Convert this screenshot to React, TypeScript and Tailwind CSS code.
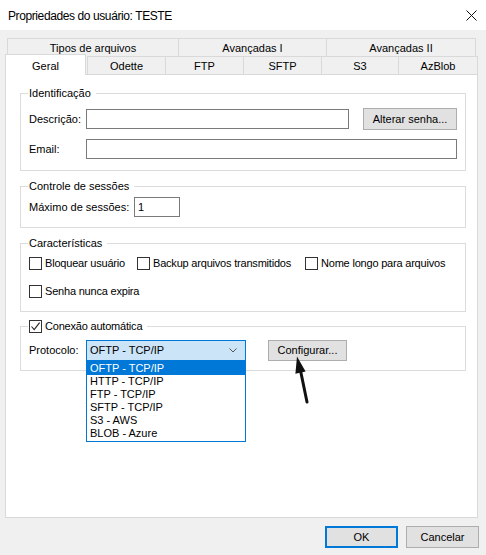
import React from 'react';

// Windows-style "Propriedades do usuário" dialog

const CheckMark = () => (
  <svg width="11" height="11" viewBox="0 0 11 11">
    <path d="M1.5 5.5 L4.2 8.6 L9.6 1.6" fill="none" stroke="#222" strokeWidth="1.1" />
  </svg>
);

const Checkbox: React.FC<{ label: string; checked?: boolean; className?: string }> = ({ label, checked, className }) => (
  <div className={`flex items-center h-[13px] ${className ?? ''}`}>
    <span className="w-[13px] h-[13px] shrink-0 border border-[#333333] bg-white flex items-center justify-center">
      {checked && <CheckMark />}
    </span>
    <span className="ml-[3px] leading-[13px] whitespace-nowrap tracking-[-0.2px]">{label}</span>
  </div>
);

const Group: React.FC<{ legend: React.ReactNode; className?: string; children?: React.ReactNode }> = ({
  legend,
  className,
  children,
}) => (
  <div className={`relative border border-[#dcdcdc] ${className ?? ''}`}>
    <div className="absolute left-[7px] -top-[7px] bg-white pl-[1px] pr-[5px] leading-[13px] whitespace-nowrap">
      {legend}
    </div>
    {children}
  </div>
);

const Button: React.FC<{ label: string; className?: string }> = ({ label, className }) => (
  <div
    className={`flex items-center justify-center bg-[#e1e1e1] border border-[#adadad] text-black whitespace-nowrap ${className ?? ''}`}
  >
    {label}
  </div>
);

const protocols = ['OFTP - TCP/IP', 'HTTP - TCP/IP', 'FTP - TCP/IP', 'SFTP - TCP/IP', 'S3 - AWS', 'BLOB - Azure'];

export default function App() {
  return (
    <div className="relative w-[486px] h-[555px] overflow-hidden bg-[#f0f0f0] text-[11px] text-black font-['Liberation_Sans',Arial,sans-serif]">
      {/* title bar */}
      <div className="h-[30px] bg-white flex items-center justify-between pl-[8px] pr-[9px]">
        <span className="text-[12px] leading-[14px] pt-[1px] tracking-[-0.4px]">Propriedades do usuário: TESTE</span>
        <svg width="11" height="11" viewBox="0 0 11 11" className="mt-[1px]">
          <path d="M0.5 0.5 L10.5 10.5 M10.5 0.5 L0.5 10.5" stroke="#111" strokeWidth="1" />
        </svg>
      </div>

      <div className="px-[5px] pt-[8px]">
        {/* tabs, upper row */}
        <div className="ml-[2px] flex h-[19px]">
          <div className="w-[171px] border-l border-t border-[#d9d9d9] flex items-center justify-center pt-[1px]">
            Tipos de arquivos
          </div>
          <div className="w-[148px] border-l border-t border-[#d9d9d9] flex items-center justify-center pt-[1px]">
            Avançadas I
          </div>
          <div className="w-[150px] border-l border-t border-r border-[#d9d9d9] flex items-center justify-center pt-[1px]">
            Avançadas II
          </div>
        </div>
        {/* tabs, lower row */}
        <div className="-mt-[3px] flex items-end h-[20px]">
          <div className="relative z-10 -mb-[1px] w-[81px] h-[21px] bg-white border-l border-t border-r border-[#d9d9d9] flex items-start justify-center pt-[3px]">
            Geral
          </div>
          <div className="w-[78px] h-[18px] ml-[1px] border-l border-t border-[#d9d9d9] flex items-center justify-center pt-[1px]">
            Odette
          </div>
          <div className="w-[78px] h-[18px] border-l border-t border-[#d9d9d9] flex items-center justify-center pt-[1px]">
            FTP
          </div>
          <div className="w-[78px] h-[18px] border-l border-t border-[#d9d9d9] flex items-center justify-center pt-[1px]">
            SFTP
          </div>
          <div className="w-[77px] h-[18px] border-l border-t border-[#d9d9d9] flex items-center justify-center pt-[1px]">
            S3
          </div>
          <div className="w-[80px] h-[18px] border-l border-t border-r border-[#d9d9d9] flex items-center justify-center pt-[1px]">
            AzBlob
          </div>
        </div>

        {/* tab page */}
        <div className="w-[473px] h-[444px] bg-white border border-[#d9d9d9] pl-[14px] pr-[11px] pt-[18px]">
          <Group legend="Identificação" className="h-[78px] pl-[8px] pr-[8px] pt-[14px]">
            <div className="flex items-center h-[22px]">
              <span className="w-[57px] shrink-0">Descrição:</span>
              <div className="flex-1 h-[20px] border border-[#7a7a7a] bg-white" />
              <Button label="Alterar senha..." className="ml-[14px] w-[94px] h-[22px]" />
            </div>
            <div className="flex items-center h-[20px] mt-[9px]">
              <span className="w-[57px] shrink-0">Email:</span>
              <div className="flex-1 h-[20px] border border-[#7a7a7a] bg-white" />
            </div>
          </Group>

          <Group legend="Controle de sessões" className="mt-[15px] h-[42px] pl-[8px] pt-[10px]">
            <div className="flex items-center h-[20px]">
              <span className="w-[105px] shrink-0">Máximo de sessões:</span>
              <div className="w-[46px] h-[20px] border border-[#7a7a7a] bg-white pl-[3px] leading-[18px]">1</div>
            </div>
          </Group>

          <Group legend="Características" className="mt-[15px] h-[69px] pl-[8px] pt-[13px]">
            <div className="flex">
              <Checkbox label="Bloquear usuário" className="w-[108px]" />
              <Checkbox label="Backup arquivos transmitidos" className="w-[168px]" />
              <Checkbox label="Nome longo para arquivos" />
            </div>
            <div className="flex mt-[15px]">
              <Checkbox label="Senha nunca expira" />
            </div>
          </Group>

          <Group legend={<Checkbox label="Conexão automática" checked />} className="mt-[14px] h-[45px] pl-[8px] pt-[13px]">
            <div className="flex items-center h-[21px]">
              <span className="w-[57px] shrink-0">Protocolo:</span>
              <div className="relative z-10 w-[160px] h-[21px]">
                <div className="h-full border border-[#0078d7] bg-[#cce4f7] flex items-center justify-between pl-[3px] pr-[8px]">
                  <span>OFTP - TCP/IP</span>
                  <svg width="8" height="5" viewBox="0 0 8 5">
                    <path d="M0.5 0.5 L4 4 L7.5 0.5" fill="none" stroke="#555" strokeWidth="1" />
                  </svg>
                </div>
                {/* open drop-down list */}
                <div className="absolute left-0 top-full w-[160px] bg-white border border-[#0078d7] pb-[1px]">
                  {protocols.map((p, i) => (
                    <div
                      key={p}
                      className={`h-[13px] leading-[13px] pl-[3px] ${i === 0 ? 'bg-[#0078d7] text-white' : ''}`}
                    >
                      {p}
                    </div>
                  ))}
                </div>
              </div>
              <Button label="Configurar..." className="ml-[22px] w-[79px] h-[21px]" />
            </div>
          </Group>
        </div>

        {/* dialog buttons */}
        <div className="flex justify-end mt-[8px] pr-[2px] gap-[8px]">
          <div className="w-[73px] h-[22px] flex items-center justify-center bg-[#e1e1e1] border-2 border-[#0078d7]">
            OK
          </div>
          <Button label="Cancelar" className="w-[73px] h-[22px]" />
        </div>
      </div>

      {/* annotation arrow */}
      <svg className="absolute left-[290px] top-[352px]" width="24" height="54" viewBox="0 0 24 54">
        <path d="M10.6 19 L17 50" stroke="#111" strokeWidth="3" strokeLinecap="round" />
        <path d="M7 4.5 L15.6 19.6 L5.4 21.8 Z" fill="#111" />
      </svg>
    </div>
  );
}
